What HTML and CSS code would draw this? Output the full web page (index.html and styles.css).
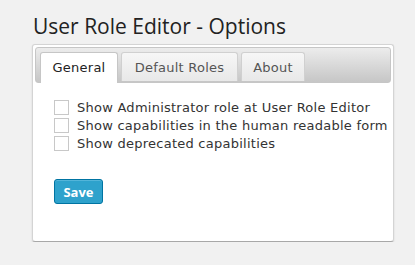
FILE: index.html
```html
<!DOCTYPE html>
<html>
<head>
<meta charset="utf-8">
<link rel="stylesheet" href="styles.css">
</head>
<body>
<div class="wrap">
  <h1 class="title">User Role Editor - Options</h1>
  <div class="panel">
    <ul class="tabbar">
      <li class="tab active t-general">General</li>
      <li class="tab t-roles">Default Roles</li>
      <li class="tab t-about">About</li>
    </ul>
    <div class="content">
      <label class="opt"><span class="cb"></span>Show Administrator role at User Role Editor</label>
      <label class="opt"><span class="cb"></span>Show capabilities in the human readable form</label>
      <label class="opt"><span class="cb"></span>Show deprecated capabilities</label>
      <button class="save">Save</button>
    </div>
  </div>
</div>
</body>
</html>
```
FILE: styles.css
```css
html, body {
  margin: 0;
  padding: 0;
  background: #f1f1f1;
}
.wrap {
  padding: 13px 0 0 32px;
  width: 362px;
}
.title {
  margin: 0 0 4px 1px;
  font-family: "Open Sans", sans-serif;
  font-weight: 400;
  font-size: 21px;
  line-height: 27px;
  color: #222;
}
.panel {
  box-sizing: border-box;
  height: 198px;
  background: #fff;
  border: 1px solid #d4d4d4;
  border-bottom-color: #a8a8a8;
  border-radius: 3px;
  padding: 2px;
  box-shadow: 0 1px 2px rgba(0,0,0,0.12);
}
.tabbar {
  list-style: none;
  margin: 0;
  padding: 4px 0 0 4px;
  height: 30px;
  display: flex;
  gap: 3px;
  border: 1px solid #c6c6c6;
  border-radius: 3px;
  background: linear-gradient(#ececec, #c6c6c6);
}
.tab {
  font-family: "DejaVu Sans", Verdana, sans-serif;
  font-size: 13px;
  letter-spacing: 0.25px;
  color: #555;
  height: 29px;
  box-sizing: border-box;
  padding: 7px 0 0 0;
  text-align: center;
  border: 1px solid #d0d0d0;
  border-bottom: none;
  border-radius: 3px 3px 0 0;
  background: linear-gradient(#f6f6f6, #e8e8e8);
}
.t-general { width: 78px; }
.t-roles { width: 117px; }
.t-about { width: 64px; }
.tab.active {
  color: #222;
  background: #fff;
  height: 31px;
  border-color: #c6c6c6;
}
.content {
  padding: 15px 0 0 19px;
}
.opt {
  display: flex;
  align-items: center;
  height: 18px;
  font-family: "DejaVu Sans", Verdana, sans-serif;
  font-size: 13px;
  letter-spacing: 0.25px;
  color: #333;
  white-space: nowrap;
}
.cb {
  display: inline-block;
  width: 13px;
  height: 13px;
  border: 1px solid #c8c8c8;
  background: #fff;
  margin-right: 8px;
  flex: none;
}
.save {
  margin-top: 27px;
  display: block;
  width: 49px;
  height: 25px;
  padding: 0;
  background: #2ea2cc;
  border: 1px solid #0074a2;
  border-radius: 3px;
  color: #fff;
  font-family: "Open Sans", sans-serif;
  font-weight: 700;
  font-size: 13px;
  box-shadow: inset 0 1px 0 rgba(120,200,230,0.5);
}
```
